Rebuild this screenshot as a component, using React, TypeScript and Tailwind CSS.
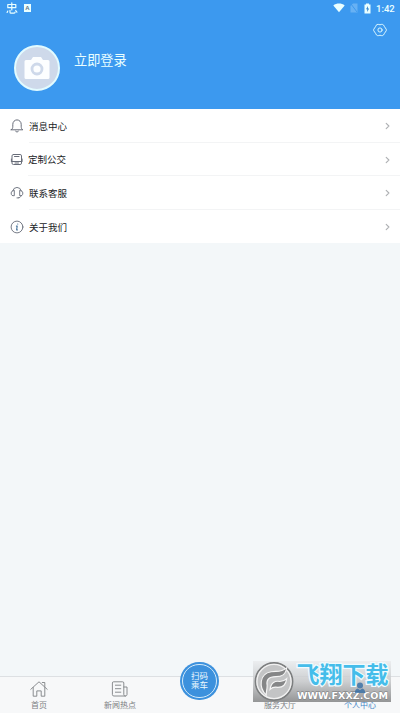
import React from "react";

const stroke = { fill: "none", stroke: "currentColor", strokeLinecap: "round", strokeLinejoin: "round" } as const;

const Bell = () => (
  <svg viewBox="0 0 14 14" className="h-3.5 w-3.5" {...stroke} strokeWidth="1">
    <path d="M1.2 10.800h11.600c-1.300-.9-1.600-1.700-1.600-3.600V5.300a4.200 4.400 0 0 0-8.400 0v1.900c0 1.900-.3 2.700-1.600 3.600ZM5.600 12.300c.7.900 2.100.9 2.800 0" />
  </svg>
);
const Bus = () => (
  <svg viewBox="0 0 14 14" className="h-3.5 w-3.5" {...stroke} strokeWidth="1">
    <rect x="2" y="1.500" width="9.500" height="10" rx="1.400" />
    <path d="M2 8.500h9.500M4.500 3.500h4.500M1.400 6v2.500M12.100 6v2.500M5 10h3.500" />
  </svg>
);
const Headset = () => (
  <svg viewBox="0 0 14 14" className="h-3.5 w-3.5" {...stroke} strokeWidth="0.9">
    <path d="M2.700 4.900a4.400 4.400 0 0 1 8.600 0M4.300 4.700v5H3C.5 9.700.5 4.700 3 4.700ZM9.700 4.700v5H11c2.500 0 2.500-5 0-5ZM11 9.800c-.3 1.500-1.300 2-2.600 2M7 11.900h1.200" />
  </svg>
);
const Info = () => (
  <svg viewBox="0 0 14 14" className="h-3.5 w-3.5" {...stroke} strokeWidth="0.9">
    <circle cx="7" cy="7" r="5.900" />
    <path d="M7.700 4h.1M6.400 6.100h.8L6.600 9.900h.8" strokeWidth="1.100" stroke="#48749b" />
  </svg>
);
const House = () => (
  <svg viewBox="0 0 18 16" className="h-4 w-[18px]" {...stroke} strokeWidth="0.9">
    <path d="m.8 8.300 8.200-7.500 8.200 7.500M3.200 6.500v8.700h3.600V9.900h4.400v5.300h3.600V6.500M12.300 1.500h2.500v4" />
  </svg>
);
const News = () => (
  <svg viewBox="0 0 18 16" className="h-4 w-[18px]" {...stroke} strokeWidth="0.9">
    <path d="M14.500 15H2.900a1.500 1.500 0 0 1-1.500-1.500V2A1.200 1.200 0 0 1 2.600.8h9A1.200 1.200 0 0 1 12.800 2v11.500c0 2 3.200 2 3.200 0V6h-3.200M4.400 4.200h5.400M4.400 7.700h5.400M4.400 11.200h5.400" />
  </svg>
);

const rows = [
  { label: "消息中心", icon: <Bell />, text: "ml-[5px]" },
  { label: "定制公交", icon: <Bus />, text: "ml-1" },
  { label: "联系客服", icon: <Headset />, text: "ml-[5px]" },
  { label: "关于我们", icon: <Info />, text: "ml-[5px]" },
];

function Header() {
  return (
    <header className="h-[109px] bg-[#3c99ef] text-[#eaffff]">
      <div className="flex h-4 items-center pr-[5px] pl-[6px]">
        <svg viewBox="0 0 12 12" className="h-3 w-3" {...stroke} strokeWidth="1.200">
          <path d="M1.800 2.500h8v3.200h-8ZM5.800 .8v7.200M1.800 9l-.7 1.500M4 8.300v1.900q0 .9 1 .9h3.200q.9 0 .9-1M9.700 8.500l1.200 1.700" />
        </svg>
        <span className="ml-[6px] flex h-2 w-[7px] items-center justify-center bg-[#eaffff] text-[6px] font-bold text-[#5d7184]">A</span>
        <svg viewBox="0 0 12 10" className="ml-auto h-[10px] w-3" fill="currentColor"><path d="M.3 2.500C3.500-.1 8.500-.1 11.700 2.500L6 9.300Z" /></svg>
        <svg viewBox="0 0 8 10" className="ml-[5px] h-[10px] w-2 text-[#76baf5]"><path d="M3 .5h4.500v9h-7V3Z" fill="currentColor" opacity=".75" /><path d="m1 1 6 8" stroke="#3c99ef" /></svg>
        <svg viewBox="0 0 7 11" className="ml-[6px] h-[11px] w-[7px]" fill="currentColor"><path d="M2 .5h3v1h1.500v9h-6v-9H2Z" /><path d="M4 3 2 6.300h1.200V9L5.200 5.500H4Z" fill="#3c89d0" /></svg>
        <span className="ml-[5px] w-[19px] pt-px font-[Roboto,sans-serif] text-[9.500px] leading-4 font-medium">1:42</span>
      </div>
      <div className="flex h-[93px] items-start pr-[13px] pl-[14px]">
        <div className="mt-[29px] flex h-[46px] w-[46px] items-center justify-center rounded-full border-2 border-[#e2fbff] bg-[#ced9ea]">
          <svg viewBox="0 0 26 24" className="h-6 w-[26px]"><path d="M2 4h5l2-3h8l2 3h5q1.500 0 1.500 1.500v16q0 1.500-1.500 1.500H2Q.5 23 .5 21.500v-16Q.5 4 2 4Z" fill="#fcfeff" /><circle cx="13" cy="13" r="5" fill="#fcfeff" stroke="#ced9ea" strokeWidth="2.800" /></svg>
        </div>
        <h1 className="mt-[35px] ml-[14px] text-[13.200px] leading-5">立即登录</h1>
        <svg viewBox="0 0 14 14" className="mt-[7px] ml-auto h-3.5 w-3.5" {...stroke} strokeWidth="0.9">
          <path d="M4.300 1.500q.7-.6 1.500 0 1.200.5 2.400 0 .8-.6 1.500 0l.9.600.9 1.600 1.700 2.500q.4.800 0 1.600l-1.700 2.500-.9 1.600-.9.600q-.7.600-1.500 0-1.200-.5-2.400 0-.8.600-1.500 0l-.9-.6-.9-1.600L.8 7.800q-.4-.8 0-1.600l1.700-2.500.9-1.600Z" /><circle cx="7" cy="7" r="2.100" />
        </svg>
      </div>
    </header>
  );
}

function Watermark() {
  return (
    <div className="absolute top-[661px] left-[253px] flex h-[41px] w-[138px] items-center bg-linear-to-b from-[#e9ebed]/75 via-[#c5c7c9]/85 to-[#8f9091]/95">
      <svg viewBox="0 0 42 42" className="h-[41px] w-[42px] shrink-0">
        <circle cx="21" cy="21" r="19" fill="#c3c4c5" stroke="#7c7e7f" strokeWidth="1.800" />
        <circle cx="21" cy="21" r="17.500" fill="none" stroke="#f0f0f0" strokeWidth="1.400" />
        <path d="M13 35C5 27 6 13 18 11c6-1 10 1 16-4-1 8-6 9-11 9-8 0-10 4-9 9 0 4-1 6-1 10Z" fill="#858687" stroke="#f5f5f5" strokeWidth="1.200" />
        <path d="M17 29c1-7 5-9 10-8q4 0 7-3-1 9-9 9-5-1-8 2Z" fill="#858687" stroke="#f5f5f5" strokeWidth="1.200" />
      </svg>
      <div className="flex h-[41px] w-[95px] flex-col items-center">
        <span className="mt-px h-[28px] text-[23px] leading-[27px] font-bold whitespace-nowrap text-[#45bdea] [-webkit-text-stroke:2.500px_#effbff] [paint-order:stroke_fill]">飞翔下载</span>
        <svg viewBox="0 0 94 12" className="h-3 w-[94px]"><text x="1" y="9" textLength="91" lengthAdjust="spacingAndGlyphs" fill="#fff" stroke="#77797b" strokeWidth=".8" paintOrder="stroke" fontFamily="DejaVu Sans, sans-serif" fontSize="9.500" fontWeight="bold">WWW.FXXZ.COM</text></svg>
      </div>
    </div>
  );
}

export default function App() {
  return (
    <div className="relative flex h-[713px] w-[400px] flex-col overflow-hidden bg-[#f3f7f9] font-['Liberation_Sans','Noto_Sans_CJK_SC',sans-serif]">
      <Header />
      <main className="flex-1">
        <div className="bg-white">
          {rows.map((row, index) => (
            <button key={row.label} className="flex h-[33.500px] w-full items-stretch pl-[10px] text-left">
              <span className="flex items-center pt-px text-[#686d79]">{row.icon}</span>
              <span className={`${row.text} flex flex-1 items-center ${index < 3 ? "border-b border-[#f3f4f5]" : ""} pt-[3px] pr-[10px] text-[9.500px] text-[#202225]`}>
                {row.label}
                <svg viewBox="0 0 5 8" className="mb-px ml-auto h-2 w-[5px] text-[#aeb0b3]" {...stroke} strokeWidth="1.100"><path d="m1.200 1.300 2.700 2.700-2.700 2.700" /></svg>
              </span>
            </button>
          ))}
        </div>
      </main>
      <nav className="flex h-[37px] border-t border-[#dde0e3] bg-[#f7f8f9] text-[8px] leading-[10px] text-[#7e8184]">
        <div className="flex w-[78px] flex-col items-center pt-[4px]"><House /><span className="mt-[4px]">首页</span></div>
        <div className="flex w-[84px] flex-col items-center pt-[4px]"><News /><span className="mt-[4px]">新闻热点</span></div>
        <div className="-mt-[15px] ml-[18px] flex h-[38px] w-[39px] items-center justify-center rounded-full bg-[#3c91dd] p-[2px]">
          <div className="flex h-[34px] w-[35px] items-center justify-center rounded-full border border-[#d2eafa] text-center text-[8.500px] leading-[9px] text-[#edfaff]">扫码<br />乘车</div>
        </div>
        <div className="ml-[19px] flex w-[84px] flex-col items-center pt-[24px]">服务大厅</div>
        <div className="flex flex-1 flex-col items-center pt-[24px] pr-0.5 text-[#4285c5]">个人中心</div>
      </nav>
      <Watermark />
      <svg viewBox="0 0 12 12" className="absolute top-[682px] left-[354px] h-3 w-3 opacity-80" fill="#366fa6"><circle cx="6" cy="3.500" r="3" /><path d="M.8 11q0-4 3-4.500L6 8l2.200-1.500q3 .5 3 4.500Z" /></svg>
    </div>
  );
}
